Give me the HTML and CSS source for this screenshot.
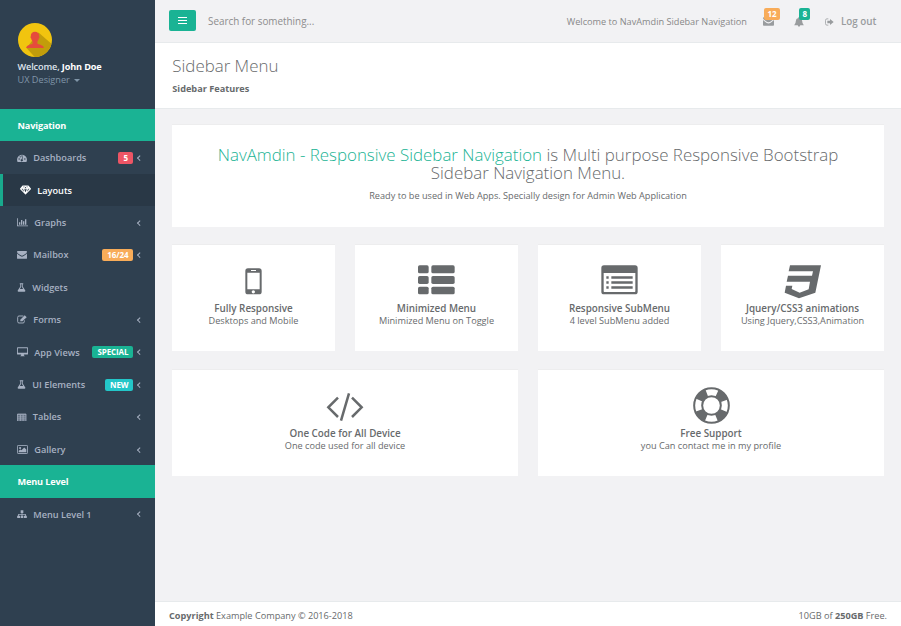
FILE: index.html
```html
<!DOCTYPE html>
<html lang="en">
<head>
<meta charset="utf-8">
<title>NavAmdin Sidebar Navigation</title>
<link rel="stylesheet" href="styles.css">
</head>
<body>
<div class="app">
  <aside class="sidebar">
    <div class="profile">
      <svg class="avatar" viewBox="0 0 34 34">
        <defs><clipPath id="disc"><circle cx="17" cy="17" r="17"/></clipPath></defs>
        <circle cx="17" cy="17" r="17" fill="#f1c40f"/>
        <path clip-path="url(#disc)" fill="#c29d0b" d="M20.5 9.5L36 23V36H18.500L8.500 25Z"/>
        <path fill="#e64c3c" d="M17 8.800c2.700 0 4.300 1.700 4.200 4.500c.5.400.300 1.900-.400 2.300c-.300 1.400-.8 2.200-1.400 2.800v2c1 1.300 6.300 1 6.500 4.700H8.200c.2-3.700 5.400-3.400 6.400-4.700v-2c-.6-.6-1.100-1.400-1.400-2.800c-.7-.4-.9-1.900-.4-2.300c-.1-2.800 1.500-4.500 4.200-4.500z"/>
      </svg>
      <div class="welcome">Welcome, <b>John Doe</b></div>
      <div class="role">UX Designer <i class="caret"></i></div>
    </div>
    <nav>
      <div class="nav-title">Navigation</div>
      <a class="item"><svg class="ico" width="10" viewBox="0 0 28 24"><path fill="currentColor" fill-rule="evenodd" d="M14 2A14 14 0 0 0 2 23H26A14 14 0 0 0 14 2ZM4 14a2 2 0 1 0 4 0a2 2 0 1 0-4 0ZM7 8a2 2 0 1 0 4 0a2 2 0 1 0-4 0ZM12 5.500a2 2 0 1 0 4 0a2 2 0 1 0-4 0ZM20 14a2 2 0 1 0 4 0a2 2 0 1 0-4 0ZM17 8L15 15a3 3 0 1 1-2-.5L15.500 7.500Z"/></svg><span>Dashboards</span><em class="badge red">5</em><i class="arrow"></i></a>
      <a class="item active"><svg class="ico" width="11" viewBox="0 0 32 28"><path fill="none" stroke="currentColor" stroke-width="3" stroke-linejoin="round" d="M8 3H24L30.500 11L16 26L1.500 11ZM1.500 11H30.500M8 3L10 11L16 25L22 11L24 3M10 11L16 3L22 11"/></svg><span>Layouts</span></a>
      <a class="item"><svg class="ico" width="11" viewBox="0 0 33 26"><path fill="currentColor" d="M0 1H2.500V22.500H33V25H0ZM6 13H10V20H6ZM12 6H16V20H12ZM18 10H22V20H18ZM24 4H28V20H24Z"/></svg><span>Graphs</span><i class="arrow"></i></a>
      <a class="item"><svg class="ico" width="10" viewBox="0 0 28 22"><path fill="currentColor" d="M2 0H26Q28 0 28 2.500Q27 6 22 9Q17 13 14 13Q11 13 6 9Q1 6 0 2.500Q0 0 2 0ZM0 7Q10 16 14 16Q18 16 28 7V20Q28 22 26 22H2Q0 22 0 20Z"/></svg><span>Mailbox</span><em class="badge orange">16/24</em><i class="arrow"></i></a>
      <a class="item"><svg class="ico" width="9" viewBox="0 0 26 26"><path fill="currentColor" fill-rule="evenodd" d="M8 1H18V3.500H16.500V10L24 22Q25 25 22 25H4Q1 25 2 22L9.500 10V3.500H8ZM12 3.500V11L8.500 17H17.500L14 11V3.500Z"/></svg><span>Widgets</span></a>
      <a class="item"><svg class="ico" width="10" viewBox="0 0 30 26"><path fill="none" stroke="currentColor" stroke-width="2.800" d="M19 3H6Q2 3 2 7V20Q2 24 6 24H18Q22 24 22 20V16"/><path fill="currentColor" d="M10 19V14L23 1L29 7L16 19Z"/></svg><span>Forms</span><i class="arrow"></i></a>
      <a class="item"><svg class="ico" width="11" viewBox="0 0 32 28"><path fill="currentColor" fill-rule="evenodd" d="M2 1H30Q32 1 32 3V20Q32 22 30 22H20V24L23 27H9L12 24V22H2Q0 22 0 20V3Q0 1 2 1ZM2.500 3.500V16.500H29.500V3.500Z"/></svg><span>App Views</span><em class="badge green">SPECIAL</em><i class="arrow"></i></a>
      <a class="item"><svg class="ico" width="9" viewBox="0 0 26 26"><path fill="currentColor" fill-rule="evenodd" d="M8 1H18V3.500H16.500V10L24 22Q25 25 22 25H4Q1 25 2 22L9.500 10V3.500H8ZM12 3.500V11L8.500 17H17.500L14 11V3.500Z"/></svg><span>UI Elements</span><em class="badge cyan">NEW</em><i class="arrow"></i></a>
      <a class="item"><svg class="ico" width="9.500" viewBox="0 0 28 26"><path fill="currentColor" opacity=".35" d="M1 3H27V24H1Z"/><path fill="none" stroke="currentColor" stroke-width="2.200" d="M1.500 3H26.500V24H1.500ZM1.500 5H26.500M10 5V24M18 5V24M2 11.500H26M2 17.500H26"/></svg><span>Tables</span><i class="arrow"></i></a>
      <a class="item"><svg class="ico" width="11" viewBox="0 0 32 26"><rect x="1.300" y="1.300" width="29.400" height="23.400" rx="2" fill="none" stroke="currentColor" stroke-width="2.500"/><circle cx="9" cy="9" r="3" fill="currentColor"/><path fill="currentColor" d="M5 21V17L10 13L13 15L21 7L27 13V21Z"/></svg><span>Gallery</span><i class="arrow"></i></a>
      <div class="nav-title">Menu Level</div>
      <a class="item"><svg class="ico" width="10" viewBox="0 0 30 26"><path fill="currentColor" d="M11 1H19V9H16.200V12H26.500V17H29.500V25H21V17H24V14.300H16.200V17H19V25H11V17H13.800V14.300H6V17H9V25H.5V17H3.500V12H13.800V9H11Z"/></svg><span>Menu Level 1</span><i class="arrow"></i></a>
    </nav>
  </aside>
  <main class="page">
    <header class="topbar">
      <button class="toggle"><i></i><i></i><i></i></button>
      <span class="search">Search for something...</span>
      <div class="tools">
        <span class="greet">Welcome to NavAmdin Sidebar Navigation</span>
        <span class="tool mail"><svg width="11" height="9" viewBox="0 0 28 22"><path fill="currentColor" d="M2 0H26Q28 0 28 2.500Q27 6 22 9Q17 13 14 13Q11 13 6 9Q1 6 0 2.500Q0 0 2 0ZM0 7Q10 16 14 16Q18 16 28 7V20Q28 22 26 22H2Q0 22 0 20Z"/></svg><em class="count orange">12</em></span>
        <span class="tool bell"><svg width="10" height="10" viewBox="0 0 28 28"><path fill="currentColor" d="M14 0Q16 0 16 2.500Q23 4 23 12Q23 19 27.500 23H17.500Q17 27 14 27Q11 27 10.500 23H.5Q5 19 5 12Q5 4 12 2.500Q12 0 14 0Z"/></svg><em class="count green">8</em></span>
        <span class="logout"><svg width="9" height="8" viewBox="0 0 27 24"><path fill="none" stroke="currentColor" stroke-width="2.300" d="M10 2.500H6Q1.500 2.500 1.500 7V17Q1.500 21.500 6 21.500H10"/><path fill="currentColor" d="M7 8H15V3L26 12L15 21V16H7Z"/></svg><span>Log out</span></span>
      </div>
    </header>
    <section class="heading">
      <h1>Sidebar Menu</h1>
      <p>Sidebar Features</p>
    </section>
    <section class="content">
      <div class="card hero">
        <h2><span class="accent">NavAmdin - Responsive Sidebar Navigation</span> is Multi purpose Responsive Bootstrap<br>Sidebar Navigation Menu.</h2>
        <p>Ready to be used in Web Apps. Specially design for Admin Web Application</p>
      </div>
      <div class="card">
        <div class="pic"><svg width="17" height="27" viewBox="0 0 51 81"><path fill="currentColor" fill-rule="evenodd" d="M9 1H42Q50 1 50 9V71Q50 79 42 79H9Q1 79 1 71V9Q1 1 9 1ZM7 14V64H44V14ZM18 6V9H33V6ZM20 71.500a5 5 0 1 0 10 0a5 5 0 1 0-10 0Z"/></svg></div>
        <h3>Fully Responsive</h3><p>Desktops and Mobile</p>
      </div>
      <div class="card">
        <div class="pic"><svg width="37" height="30" viewBox="0 0 111 90"><g fill="currentColor"><rect x="0" y="1" width="32" height="24" rx="5"/><rect x="40" y="1" width="70" height="24" rx="5"/><rect x="0" y="33" width="32" height="24" rx="5"/><rect x="40" y="33" width="70" height="24" rx="5"/><rect x="0" y="65" width="32" height="23" rx="5"/><rect x="40" y="65" width="70" height="23" rx="5"/></g></svg></div>
        <h3>Minimized Menu</h3><p>Minimized Menu on Toggle</p>
      </div>
      <div class="card">
        <div class="pic"><svg width="37" height="30" viewBox="0 0 111 90"><path fill="currentColor" fill-rule="evenodd" d="M9 1H102Q110 1 110 9V80Q110 88 102 88H9Q1 88 1 80V9Q1 1 9 1ZM8 24V79Q8 81 10 81H101Q103 81 103 79V24Z"/><path fill="currentColor" d="M16 34H23V41H16ZM31 34H95V41H31ZM16 49H23V56H16ZM31 49H95V56H31ZM16 64H23V71H16ZM31 64H95V71H31Z"/></svg></div>
        <h3>Responsive SubMenu</h3><p>4 level SubMenu added</p>
      </div>
      <div class="card">
        <div class="pic"><svg class="css3" width="37" height="34" viewBox="0 0 111 102"><path fill="currentColor" d="M18 1H111L94 83L45 100L2 83L6 62H25L23 72L47 83L74 73L78 50H8L12 32H84L87 19H14Z"/></svg></div>
        <h3>Jquery/CSS3 animations</h3><p>Using Jquery,CSS3,Animation</p>
      </div>
      <div class="card wide">
        <div class="pic"><svg width="38" height="28" viewBox="0 0 114 84"><path fill="none" stroke="currentColor" stroke-width="7.500" d="M36 14L7 43L36 72M78 14L107 43L78 72M69 1L45 83"/></svg></div>
        <h3>One Code for All Device</h3><p>One code used for all device</p>
      </div>
      <div class="card wide">
        <div class="pic ring"><svg width="37" height="37" viewBox="0 0 111 111"><g fill="none" stroke="currentColor"><circle cx="55.500" cy="55.500" r="52" stroke-width="6"/><circle cx="55.500" cy="55.500" r="28" stroke-width="6"/><circle cx="55.500" cy="55.500" r="40" stroke-width="24" stroke-dasharray="31.400 31.430" stroke-dashoffset="-15.700"/></g></svg></div>
        <h3>Free Support</h3><p>you Can contact me in my profile</p>
      </div>
    </section>
    <footer class="footer"><span><b>Copyright</b> Example Company © 2016-2018</span><span>10GB of <b>250GB</b> Free.</span></footer>
  </main>
</div>
</body>
</html>
```
FILE: styles.css
```css
* { box-sizing: border-box; }
body { margin: 0; font: 9.16px/13px "Open Sans", sans-serif; color: #676a6c; background: #2f4050; }
h1, h2, h3, p { margin: 0; }
em, i { font-style: normal; }
svg { display: block; flex: none; }
.app { display: flex; width: 901px; height: 626px; overflow: hidden; white-space: nowrap; }

.sidebar { width: 155px; flex: none; background: #2f4050; }
.profile { height: 109px; padding: 23px 17.500px 0; }
.avatar { width: 34px; height: 34px; }
.welcome { margin-top: 4px; line-height: 12px; color: #dfe4ed; font-weight: 600; letter-spacing: -.14px; }
.welcome b { color: #fff; font-weight: 700; }
.role { color: #8095a8; }
.caret { display: inline-block; border: 3px solid transparent; border-top-color: currentColor; border-bottom: 0; margin-left: 2px; vertical-align: 1px; }
.nav-title { height: 32.400px; line-height: 32.400px; padding: .6px 0 0 17.500px; background: #1ab394; color: #fff; font-weight: 700; letter-spacing: -.15px; }
.item { display: flex; align-items: center; height: 32.400px; padding: .4px 13px 0 17.300px; color: #a7b1c2; font-weight: 600; }
.item span { margin-left: 6px; }
.item.active { background: #293846; border-left: 3px solid #19aa8d; color: #fff; }
.arrow { width: 3.600px; height: 3.600px; border: solid currentColor; border-width: 0 0 1px 1px; transform: rotate(45deg); margin: 0 0 0 5px; }
.item span + .arrow { margin-left: auto; }
.badge { margin-left: auto; height: 12px; line-height: 12px; padding: 0 5px; border-radius: 2px; color: #fff; font-size: 8px; font-weight: 700; letter-spacing: -.1px; }
.red { background: #ed5565; }
.badge.red { padding: 0 5.500px; }
.orange { background: #f8ac59; }
.green { background: #1ab394; }
.cyan { background: #23c6c8; }

.page { flex: 1; display: flex; flex-direction: column; background: #f2f2f4; }
.topbar { height: 43px; display: flex; align-items: center; padding: 1px 24.500px 0 14px; border-bottom: 1px solid #e7eaec; color: #888; }
.toggle { width: 27px; height: 21px; margin-bottom: 3px; border: 0; border-radius: 2px; background: #1ab394; padding: 0; display: flex; flex-direction: column; align-items: center; justify-content: center; gap: 1px; }
.toggle i { width: 9px; height: 1px; background: #fff; }
.toggle i + i { margin-top: 1px; }
.search { margin-left: 12px; font-size: 9.900px; color: #8d8d8d; }
.tools { margin-left: auto; display: flex; align-items: center; color: #999c9e; }
.greet { color: #888; }
.tool { position: relative; }
.mail { margin-left: 16px; }
.bell { margin-left: 20px; }
.count { position: absolute; left: 1.500px; top: -9px; height: 12px; line-height: 12px; padding: 0 3px; border-radius: 2px; color: #fff; font-size: 8px; font-weight: 700; }
.bell .count { left: 5.500px; }
.logout { display: flex; align-items: center; gap: 7px; margin-left: 21px; font-weight: 600; font-size: 9.860px; }
.heading { height: 66px; background: #fff; border-bottom: 1px solid #e7eaec; padding: 13px 17.300px 0; }
.heading h1 { font-size: 16.900px; line-height: 20px; font-weight: 300; }
.heading p { font-weight: 700; margin-top: 6px; }
.content { flex: 1; padding: 15.500px 17px 0; display: grid; grid-template-columns: repeat(4, 163px); column-gap: 20px; grid-template-rows: 102px 106px 106px; row-gap: 18.500px; }
.card { background: #fff; text-align: center; box-shadow: 0 -1px 0 #ededee; display: flex; flex-direction: column; align-items: center; }
.hero { grid-column: span 4; padding-top: 21px; }
.hero h2 { font-size: 16.900px; line-height: 18.500px; font-weight: 300; }
.hero p { margin-top: 6px; }
.accent { color: #1ab394; }
.wide { grid-column: span 2; }
.pic { height: 57px; display: flex; align-items: flex-end; padding-bottom: 7px; }
.css3 { margin-bottom: -4px; }
.wide .pic { padding-bottom: 6px; }
.wide .ring { padding-bottom: 3px; }
.card h3 { font-size: 9.860px; line-height: 12px; font-weight: 600; }
.footer { height: 25px; display: flex; justify-content: space-between; align-items: center; padding: 2px 14px 0; background: #fff; border-top: 1px solid #e7eaec; }
```
